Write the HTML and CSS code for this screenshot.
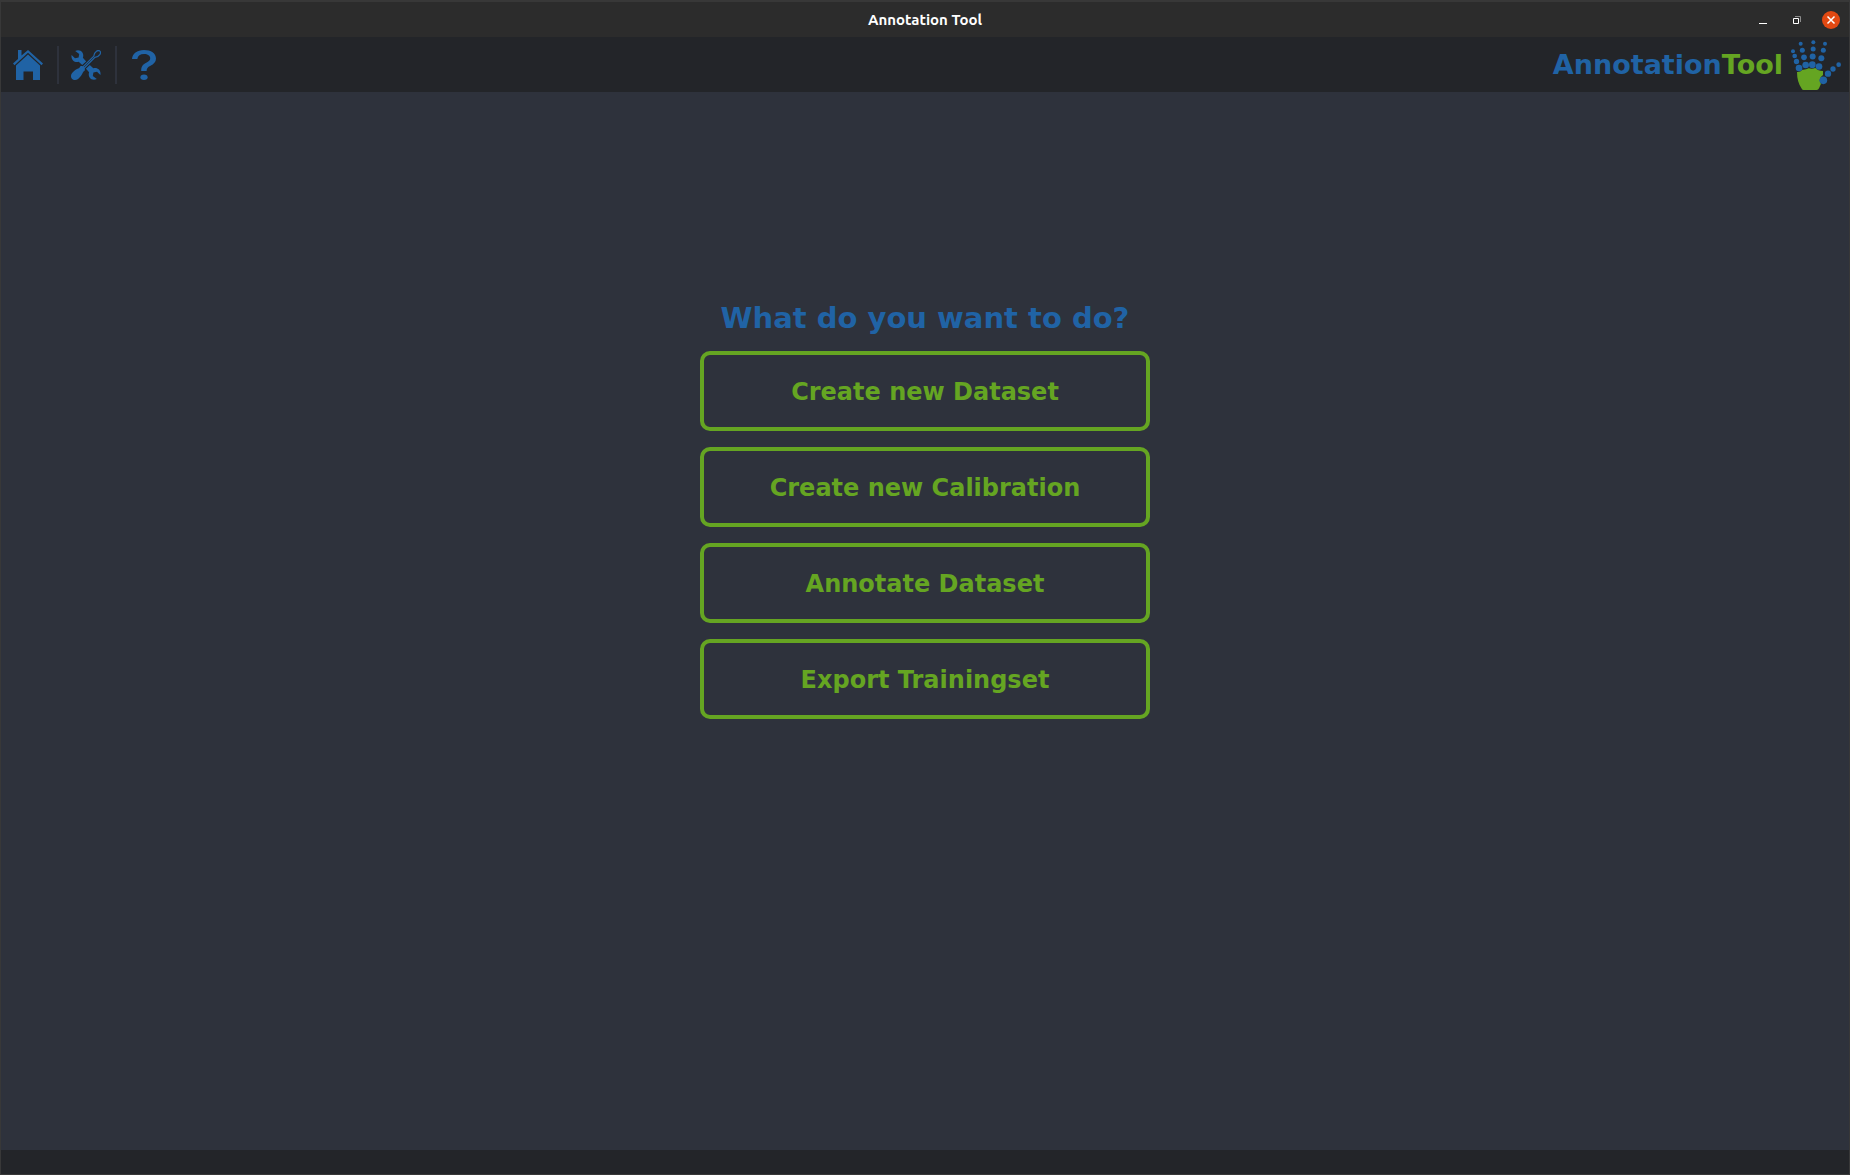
FILE: index.html
```html
<!DOCTYPE html>
<html lang="en">
<head>
<meta charset="utf-8">
<title>Annotation Tool</title>
<link rel="stylesheet" href="styles.css">
</head>
<body>
<div class="window">
  <header class="titlebar">
    <span class="titlebar-text">Annotation Tool</span>
    <div class="window-controls">
      <button class="window-button" type="button" aria-label="Minimize">
        <svg width="18" height="18" viewBox="0 0 18 18"><path d="M5 12.500h8" stroke="#fff"/></svg>
      </button>
      <button class="window-button" type="button" aria-label="Restore">
        <svg width="18" height="18" viewBox="0 0 18 18" fill="none"><path d="M7 5.500h5.500v5.500" stroke="#8c8c8c"/><path d="M5.500 7.500h5v5h-5z" stroke="#fff"/></svg>
      </button>
      <button class="window-button close" type="button" aria-label="Close">
        <svg width="18" height="18" viewBox="0 0 18 18"><path d="M5.500 5.500l7 7m0-7l-7 7" stroke="#fff" stroke-width="1.500"/></svg>
      </button>
    </div>
  </header>

  <nav class="toolbar">
    <button class="tool" type="button" aria-label="Home">
      <svg width="30" height="30" viewBox="0 0 30 30" fill="#2063a5">
        <path d="M5 0h3.500v5.500L15 0l15 13.500-1.500 1.700L15 2.800 1.500 15.200 0 13.500l5-4.500z"/>
        <path d="M15 4.500l12 11V30h-7v-8.500h-9.500V30H3V15.500z"/>
      </svg>
    </button>
    <button class="tool" type="button" aria-label="Settings">
      <svg width="30" height="30" viewBox="0 0 30 30" fill="#2063a5">
        <path d="M4.200.9C7-.3 10 .3 11.400 2.500c1.100 1.700 1 3.700.5 5.200l3.300 3.800-4 3.600-3.500-3.400c-2 .6-4.300.2-5.700-1.300C.7 8.900.2 6.800.6 4.900l3.400 3.300 3.600-.8.600-3.500z"/>
        <path transform="rotate(180 15 15)" d="M4.200.9C7-.3 10 .3 11.400 2.500c1.100 1.700 1 3.700.5 5.200l3.300 3.800-4 3.600-3.500-3.400c-2 .6-4.300.2-5.700-1.300C.7 8.900.2 6.800.6 4.900l3.400 3.300 3.600-.8.600-3.500z"/>
        <path d="M12 17.500L23 6.500c.2-2 1-4 2.500-5.200 1.200-.9 2.700-.9 3.500-.2.700.8.500 2.300-.3 3.500-1.200 1.500-3 2.300-5 2.500L12.800 18.400" fill="none" stroke="#232529" stroke-width="3.500"/>
        <path d="M9.300 16.300c1-.5 2.700 0 3.600 1 .9.900 1.300 2.400.7 3.400-.9.500-1.400 1-1.700 1.800-1 2.400-2.700 4.800-4.800 6.400-1.900 1.500-4.900 1.300-6.200-.2-1.300-1.500-1.200-4.100.2-5.700 1.900-2.300 4.200-4 6.700-4.800.8-.3 1.100-.9 1.500-1.900z"/>
        <path d="M11.700 17.200L22.800 6.100c.1-1.800 1.100-3.800 2.700-4.900 1.200-.8 2.600-.8 3.400 0s.7 2.200-.1 3.400c-1.100 1.600-3.100 2.700-4.900 2.800L12.800 18.500" fill="none" stroke="#2063a5" stroke-width="1.200"/>
      </svg>
    </button>
    <button class="tool" type="button" aria-label="Help">
      <svg width="30" height="30" viewBox="0 0 30 30" fill="#2063a5">
        <path d="M3 9C3.500 3.500 8 0 15 0s12 3.300 12 8.500c0 3.500-2.300 5.700-5.500 7.300-3 1.500-3.700 2.600-3.900 5.200h-5.400c0-4.300 1.300-6.300 5-8.200 2.600-1.300 4-2.400 4-4.500 0-2.700-2.400-4.300-6.200-4.300-3.900 0-6.100 1.800-6.700 5z"/>
        <ellipse cx="15" cy="27.300" rx="3.600" ry="2.700"/>
      </svg>
    </button>
    <div class="brand">
      <span class="brand-name">Annotation<span class="brand-accent">Tool</span></span>
      <svg width="54" height="54" viewBox="30 24 162 162">
        <path fill="#65a522" d="M51 126q10 1 16-7 10 1 19-4 10 3 20-1 8 8 15 8 6 0 8 1v12q-9 6-10 15 0 6 4 11l-6 14q-2 5-7 5H70q-4 0-6-6-13-19-13-48z"/>
        <g fill="#2063a5">
          <circle cx="39" cy="64" r="6"/><circle cx="44" cy="78" r="7"/><circle cx="49.500" cy="94.500" r="8"/><circle cx="57" cy="114" r="10"/>
          <circle cx="62" cy="41" r="6"/><circle cx="67" cy="61" r="7.500"/><circle cx="72" cy="82" r="8.500"/><circle cx="77" cy="105" r="10"/>
          <circle cx="100" cy="37" r="6"/><circle cx="99.500" cy="57" r="7.500"/><circle cx="98" cy="79.500" r="9"/><circle cx="97" cy="104" r="10"/>
          <circle cx="135" cy="41" r="6"/><circle cx="130" cy="61" r="7.500"/><circle cx="124" cy="84.500" r="9"/><circle cx="117" cy="109.500" r="10"/>
          <circle cx="176" cy="104" r="7"/><circle cx="159" cy="117" r="8"/><circle cx="144" cy="131" r="9.500"/><circle cx="130" cy="151" r="11.500"/>
        </g>
      </svg>
    </div>
  </nav>

  <main class="content">
    <h1 class="question">What do you want to do?</h1>
    <button class="choice" type="button">Create new Dataset</button>
    <button class="choice" type="button">Create new Calibration</button>
    <button class="choice" type="button">Annotate Dataset</button>
    <button class="choice" type="button">Export Trainingset</button>
  </main>

  <footer class="statusbar"></footer>
</div>
</body>
</html>
```
FILE: styles.css
```css
* {
  box-sizing: border-box;
}

body {
  margin: 0;
  background: #2e323c;
  font-family: "DejaVu Sans", sans-serif;
}

button {
  border: 0;
  padding: 0;
  background: none;
  font: inherit;
}

svg {
  display: block;
}

.window {
  display: flex;
  flex-direction: column;
  min-height: 100vh;
  border: 1px solid #383838;
}

.titlebar {
  display: grid;
  grid-template-columns: 1fr auto 1fr;
  align-items: center;
  height: 36px;
  border-top: 1px solid #383838;
  background: #2c2c2c;
}

.titlebar-text {
  grid-column: 2;
  color: #fff;
  font: bold 15px/18px Ubuntu, "Noto Sans", sans-serif;
}

.window-controls {
  display: flex;
  justify-content: flex-end;
  gap: 16px;
  padding-right: 9px;
}

.window-button {
  width: 18px;
  height: 18px;
  border-radius: 50%;
}

.close {
  background: #e24912;
}

.toolbar {
  display: flex;
  align-items: center;
  height: 55px;
  background: #232529;
}

.tool {
  height: 38px;
  padding: 0 14px 0 12px;
}

.tool + .tool {
  border-left: 2px solid #2e323c;
}

.brand {
  display: flex;
  align-items: center;
  gap: 7px;
  margin-left: auto;
  padding-right: 5px;
}

.brand-name {
  color: #2063a5;
  font-size: 27px;
  font-weight: bold;
  line-height: 32px;
}

.brand-accent {
  color: #65a522;
}

.content {
  flex: 1;
  display: flex;
  flex-direction: column;
  align-items: center;
  gap: 16px;
  padding: 210px 16px;
}

.question {
  margin: 0;
  color: #2063a5;
  font-size: 29px;
  line-height: 33px;
}

.choice {
  width: 450px;
  max-width: 100%;
  height: 80px;
  padding-top: 2px;
  border: 4px solid #65a522;
  border-radius: 10px;
  color: #65a522;
  font-size: 24px;
  font-weight: bold;
}

.statusbar {
  height: 24px;
  background: #232529;
}
```
